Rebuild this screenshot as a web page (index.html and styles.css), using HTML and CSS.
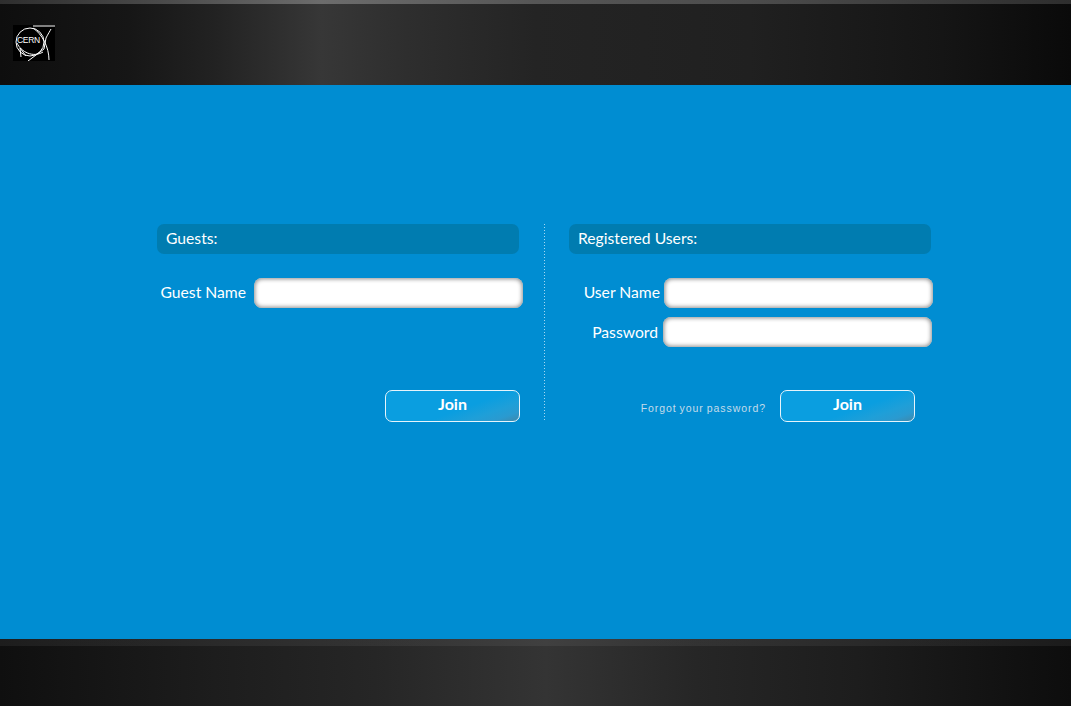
FILE: index.html
```html
<!DOCTYPE html>
<html lang="en">
<head>
<meta charset="utf-8">
<title>Login</title>
<link rel="stylesheet" href="styles.css">
</head>
<body>
<header class="top">
  <svg class="logo" viewBox="0 0 42 36" width="42" height="36" aria-label="CERN">
    <rect width="42" height="36" fill="#000"/>
    <g fill="none" stroke="#fff" stroke-width="1">
      <circle cx="17" cy="17" r="14"/>
      <path d="M20 1 H42"/>
      <path d="M20 3 C29 9 36 22 36 35"/>
      <path d="M33 13 C35 9 37 6 38 4"/>
      <path d="M4 18 C8 27 20 33 30 27"/>
      <path d="M33 13 L31 24 L15 36"/>
      <path d="M7 23 L8 32 M7 23 L13 31"/>
    </g>
    <text class="logo-text" x="4" y="18">CERN</text>
  </svg>
</header>
<main class="stage">
  <div class="panels">
    <section class="panel guest">
      <h2 class="panel-title">Guests:</h2>
      <div class="fields">
        <div class="row"><label class="label">Guest Name</label><input class="field" type="text"></div>
      </div>
      <div class="actions"><button class="join" type="button">Join</button></div>
    </section>
    <div class="divider"></div>
    <section class="panel registered">
      <h2 class="panel-title">Registered Users:</h2>
      <div class="fields">
        <div class="row"><label class="label">User Name</label><input class="field" type="text"></div>
        <div class="row row-password"><label class="label">Password</label><input class="field" type="password"></div>
      </div>
      <div class="actions"><a class="forgot" href="#">Forgot your password?</a><button class="join" type="button">Join</button></div>
    </section>
  </div>
</main>
<footer class="bottom"></footer>
</body>
</html>
```
FILE: styles.css
```css
* { box-sizing: border-box; }
html, body { height: 100%; }
body {
  margin: 0;
  display: flex;
  flex-direction: column;
  height: 706px;
  overflow: hidden;
  background: #008dd2;
  font-family: "Lato", "Open Sans", sans-serif;
  color: #fff;
}
.top {
  height: 85px;
  flex: none;
  padding: 21px 0 0 13px;
  border-top: 4px solid;
  border-image: linear-gradient(90deg, #2e2e2e 0, #4a4a4a 15%, #6c6c6c 30%, #565656 50%, #4c4c4c 70%, #2e2e2e 100%) 1;
  background: linear-gradient(90deg, #0e0e0e 0, #161616 12%, #222 20%, #373737 30%, #2e2e2e 38%, #242424 50%, #202020 70%, #151515 88%, #0a0a0a 100%);
}
.logo { display: block; }
.logo-text { font: 8.5px "Liberation Sans", sans-serif; fill: #fff; letter-spacing: -.3px; }
.stage {
  flex: 1;
  padding: 139px 0 0 157px;
}
.panels { display: flex; }
.panel { display: flex; flex-direction: column; }
.guest { width: 366px; }
.registered { width: 364px; }
.divider {
  width: 1px;
  height: 197px;
  margin: 0 24px 0 21px;
  background: repeating-linear-gradient(180deg, #a6d8f0 0, #a6d8f0 1px, transparent 1px, transparent 3px);
}
.panel-title {
  margin: 0;
  width: 362px;
  height: 30px;
  padding-left: 9px;
  border-radius: 7px;
  background: #007cb0;
  font-size: 15.7px;
  font-weight: 400;
  line-height: 28px;
}
.fields {
  margin-top: 24px;
  height: 88px;
  display: flex;
  flex-direction: column;
  gap: 9px;
}
.row { display: flex; align-items: center; justify-content: flex-end; }
.label { font-size: 15.7px; line-height: 26px; margin: 0 8px 2px 0; white-space: nowrap; }
.registered .label { margin-right: 4px; }
.row-password { margin-right: 1px; }
.registered .row-password .label { margin: 0 5px 1px 0; }
.field {
  width: 269px;
  height: 30px;
  border: 0;
  border-radius: 8px;
  background: #fff;
  box-shadow: inset 0 0 4px 1px #8c8c8c;
}
.actions {
  margin-top: 24px;
  display: flex;
  align-items: center;
  justify-content: flex-end;
  height: 32px;
}
.guest .actions { margin-right: 3px; }
.registered .actions { margin-right: 18px; }
.forgot {
  margin: 4px 14px 0 0;
  font: 10.5px "Liberation Sans", sans-serif;
  letter-spacing: .95px;
  word-spacing: -1px;
  color: #c4dcea;
  text-decoration: none;
}
.join {
  width: 135px;
  height: 32px;
  padding: 0 0 5px;
  border: 1px solid #e6f4fb;
  border-radius: 7px;
  background: linear-gradient(160deg, #0a9ee0 0, #0a9ee0 58%, #1f9fd8 76%, #2a9ad0 88%, #3f88ab 100%);
  color: #fff;
  font-family: "Lato", sans-serif;
  font-size: 16px;
  font-weight: 700;
}
.bottom {
  height: 67px;
  flex: none;
  background:
    linear-gradient(180deg, rgba(255,255,255,.06) 0, rgba(255,255,255,.06) 7px, transparent 7px),
    linear-gradient(90deg, #0f0f0f 0, #1d1d1d 20%, #262626 35%, #343434 51%, #262626 65%, #1d1d1d 80%, #0d0d0d 100%);
}
```
